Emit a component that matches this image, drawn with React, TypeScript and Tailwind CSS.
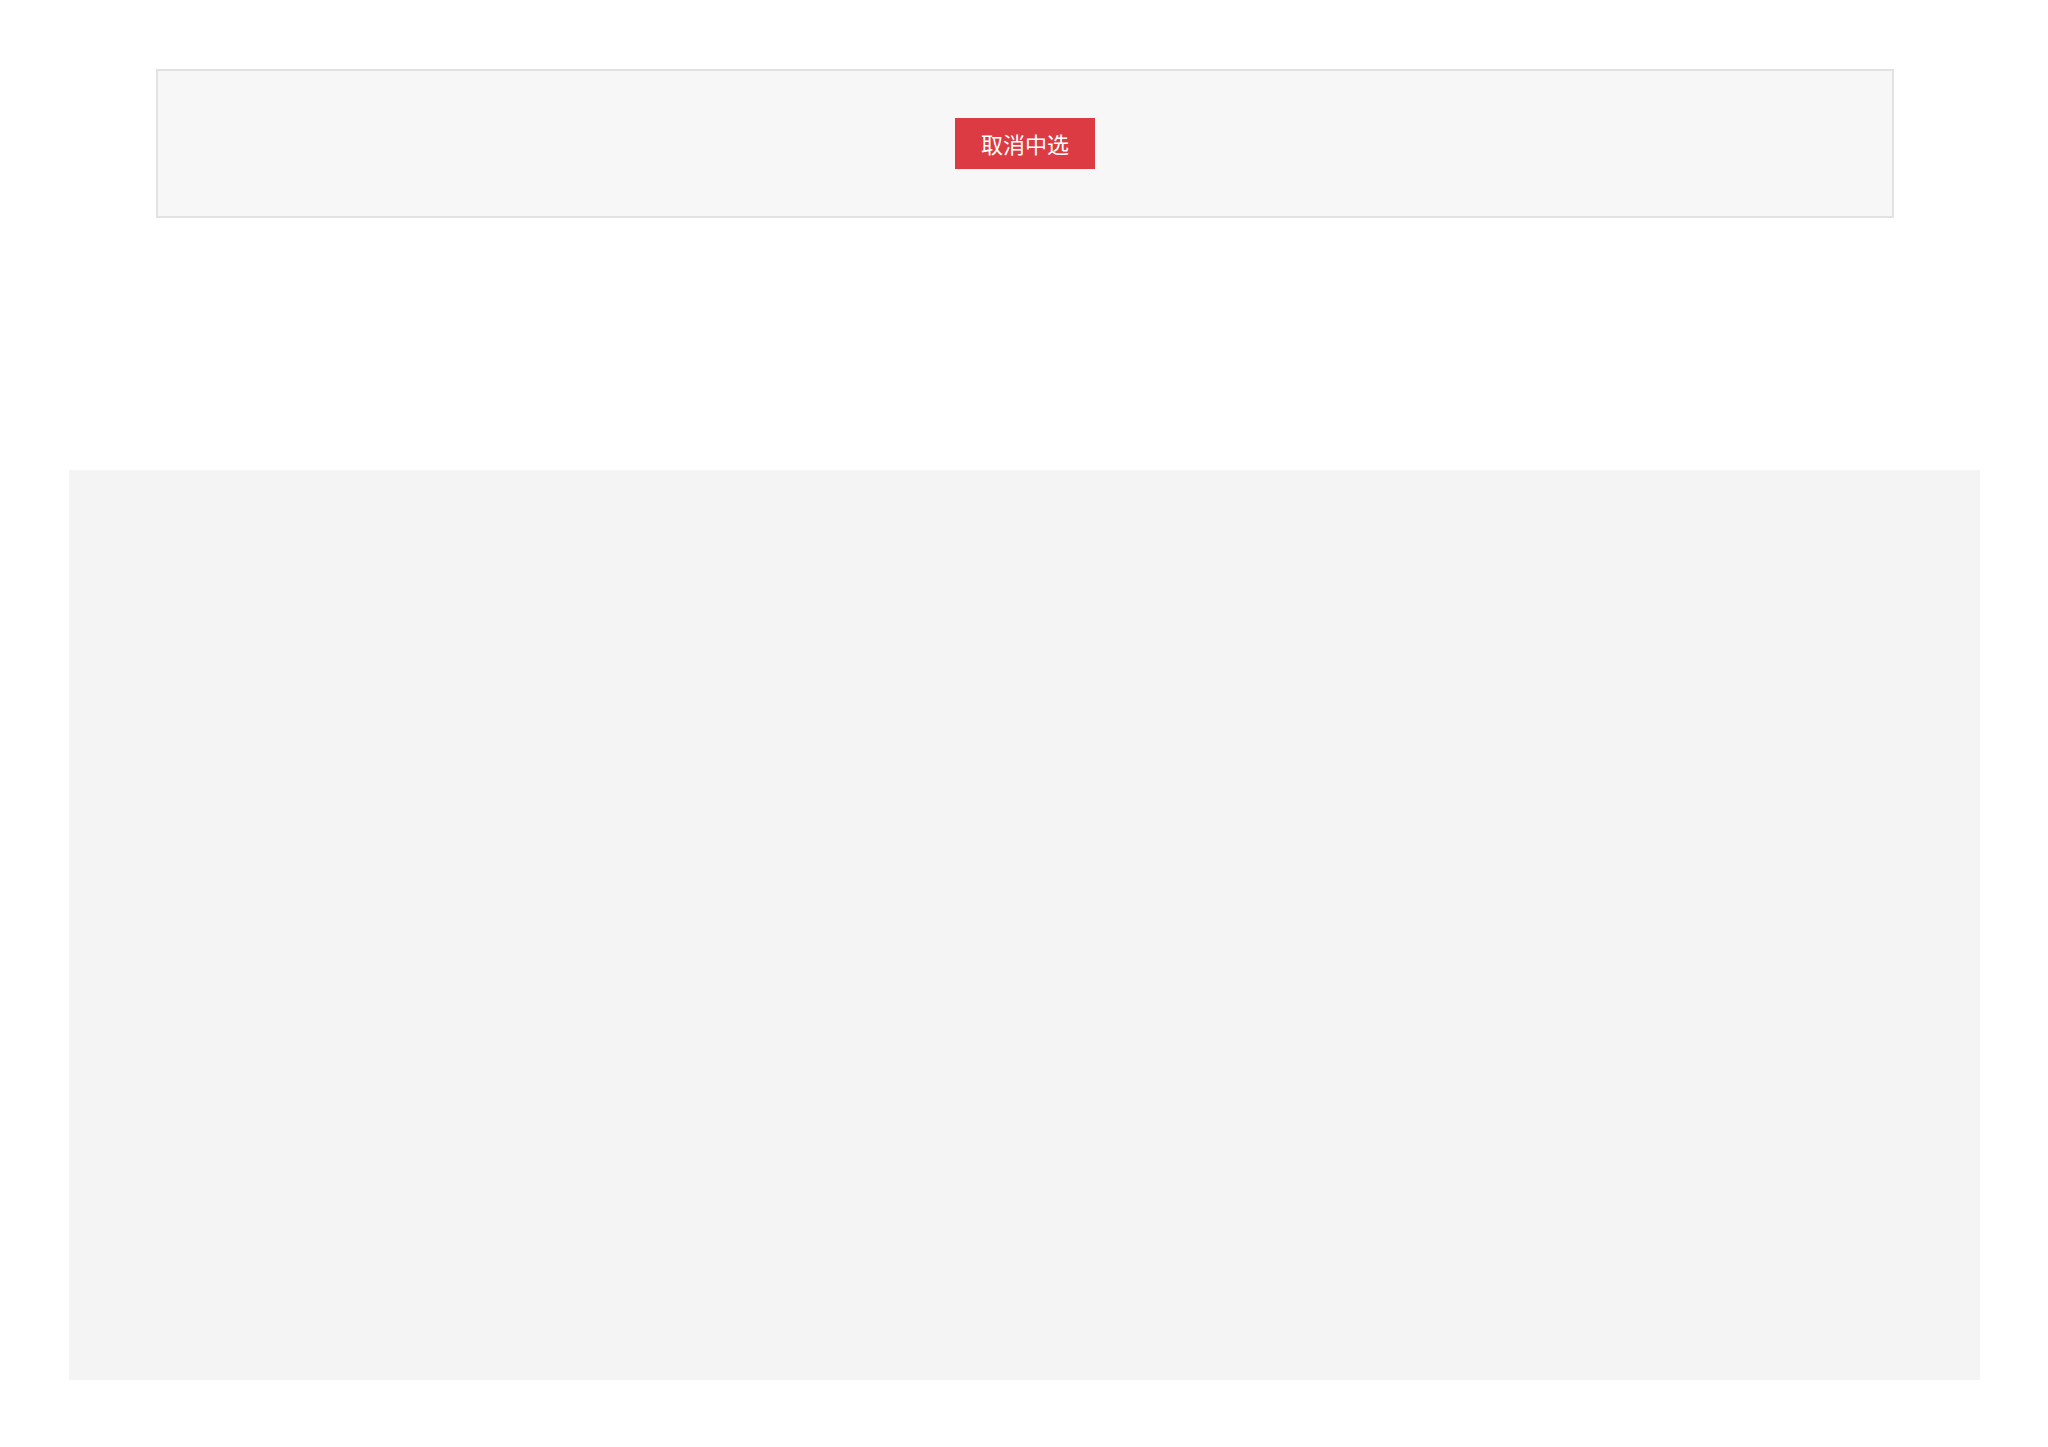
export default function App() {
  return (
    <div className="min-h-screen bg-white pt-[69px] pb-[68px] font-['Noto_Sans_CJK_SC','Noto_Sans',sans-serif]">
      <div className="ml-[156px] flex h-[149px] w-[1738px] items-center justify-center border-2 border-[#e2e2e2] bg-[#f7f7f7]">
        <button className="flex h-[51px] w-[140px] items-center justify-center bg-[#dc3b43] text-[22px] text-white">
          取消中选
        </button>
      </div>
      <div className="ml-[69px] mt-[252px] h-[910px] w-[1911px] bg-[#f4f4f4]"></div>
    </div>
  );
}
